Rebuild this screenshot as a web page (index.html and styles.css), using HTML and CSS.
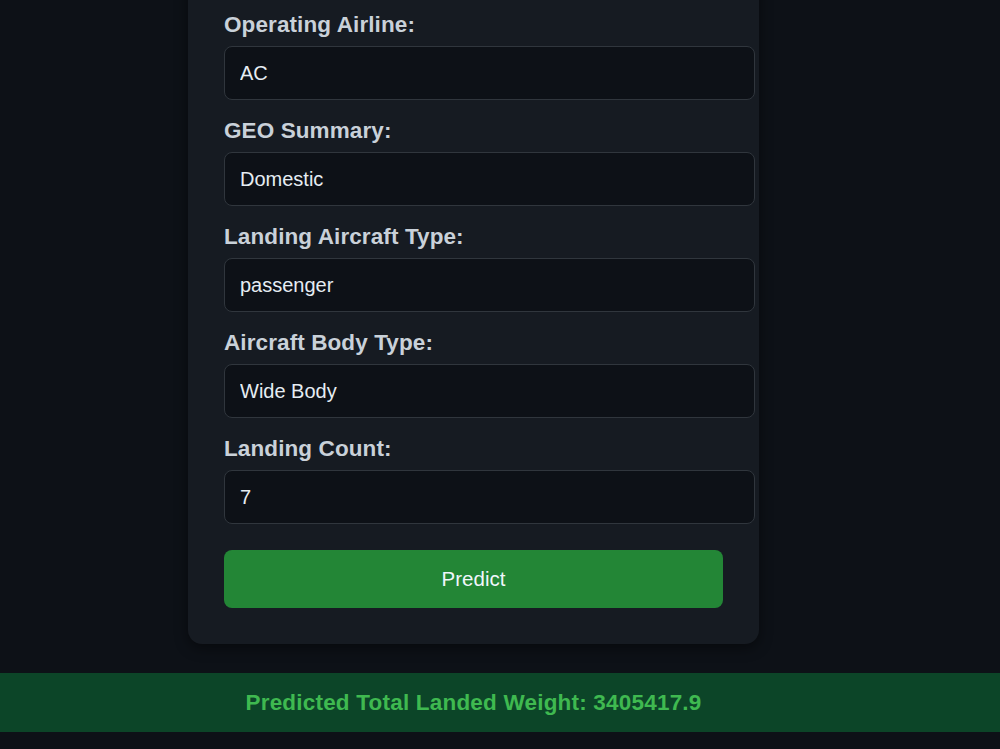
FILE: index.html
```html
<!DOCTYPE html>
<html>
<head>
    <title>Landed Weight Predictor</title>
    <link rel="stylesheet" href="styles.css">
</head>
<body>
    <div class="main">
        <form class="predict-form" action="/predict" method="post">
            <label for="airline">Operating Airline:</label>
            <input type="text" id="airline" name="airline" value="AC">

            <label for="geo">GEO Summary:</label>
            <input type="text" id="geo" name="geo" value="Domestic">

            <label for="aircraft_type">Landing Aircraft Type:</label>
            <input type="text" id="aircraft_type" name="aircraft_type" value="passenger">

            <label for="body_type">Aircraft Body Type:</label>
            <input type="text" id="body_type" name="body_type" value="Wide Body">

            <label for="count">Landing Count:</label>
            <input type="text" id="count" name="count" value="7">

            <button type="submit">Predict</button>
        </form>
    </div>

    <div class="result">Predicted Total Landed Weight: 3405417.9</div>
</body>
</html>
```

FILE: styles.css
```css
body {
    font-family: "Liberation Sans", Arial, sans-serif;
    background-color: #0d1117;
    color: #c9d1d9;
    margin: 0;
}

.main {
    padding-right: 53px;
}

.predict-form {
    width: 499px;
    margin: -24px auto 0;
    padding: 36px;
    background-color: #161b22;
    border-radius: 14px;
    box-shadow: 0 4px 14px rgba(0, 0, 0, 0.45);
}

.predict-form label {
    display: block;
    font-size: 22.5px;
    font-weight: bold;
    letter-spacing: 0.1px;
    color: #c9d1d9;
    margin-bottom: 8px;
}

.predict-form input[type="text"] {
    display: block;
    width: 100%;
    margin: 0 0 18px;
    padding: 14.5px 15px;
    font-family: inherit;
    font-size: 20px;
    color: #e6edf3;
    background-color: #0d1117;
    border: 1px solid #30363d;
    border-radius: 8px;
    outline: none;
}

.predict-form button {
    display: block;
    width: 100%;
    margin-top: 26px;
    padding: 17px 0;
    font-family: inherit;
    font-size: 20.5px;
    color: #f0f6fc;
    background-color: #238636;
    border: none;
    border-radius: 8px;
    cursor: pointer;
}

.predict-form button:hover {
    background-color: #2ea043;
}

.result {
    margin-top: 29px;
    padding: 16.5px 53px 16.5px 0;
    background-color: #0c4528;
    color: #3fb950;
    font-size: 22.5px;
    font-weight: bold;
    letter-spacing: 0.2px;
    text-align: center;
}
```
